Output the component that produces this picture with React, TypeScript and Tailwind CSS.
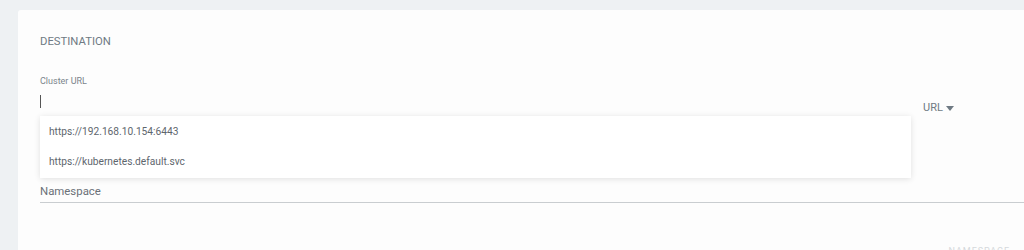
// Destination panel of an app-create form, with the Cluster URL
// autocomplete open over the fields below it.
const CLUSTERS = ["https://192.168.10.154:6443", "https://kubernetes.default.svc"];

export default function App() {
  return (
    <div
      className="h-[250px] w-[1024px] overflow-hidden bg-[#eef1f3] pl-[18px] pt-[10px]"
      style={{ fontFamily: "Roboto, 'Liberation Sans', sans-serif" }}
    >
      <div className="relative h-[260px] rounded-tl-[3px] bg-[#fdfdfd] pl-[22px] pt-[24px]">
        <div className="text-[11.3px] leading-[16px] text-[#6f7a83]">DESTINATION</div>

        <div className="mt-[24px] text-[9px] leading-[14px] text-[#7b848b]">Cluster URL</div>

        <div className="relative mt-[8px] flex items-center">
          <div className="h-[24px] w-[871px]">
            <span className="-mt-px block h-[13px] w-px bg-[#555]" />
          </div>
          <div className="ml-[12px] flex items-center gap-[3px] text-[11px] text-[#6f7a83]">
            URL
            <svg width="8" height="5" viewBox="0 0 8 5">
              <path d="M0 0h8L4 5z" fill="#6f7a83" />
            </svg>
          </div>

          {/* autocomplete menu */}
          <div className="absolute left-0 top-[20px] z-10 w-[871px] bg-white py-[1px] shadow-[0_1px_6px_rgba(0,0,0,0.12)]">
            {CLUSTERS.map((c) => (
              <div key={c} className="flex h-[30px] items-center pl-[9px] text-[10.2px] text-[#5e666d]">
                {c}
              </div>
            ))}
          </div>
        </div>

        <div className="mt-[63px] border-b border-[#c9cdd0] pb-[3px] text-[11.4px] leading-[16px] text-[#6b7178]">
          Namespace
        </div>

        <div className="absolute right-[14px] top-[235px] text-[9px] tracking-[1px] text-[#d5d9dc]">
          NAMESPACE
        </div>
      </div>
    </div>
  );
}
